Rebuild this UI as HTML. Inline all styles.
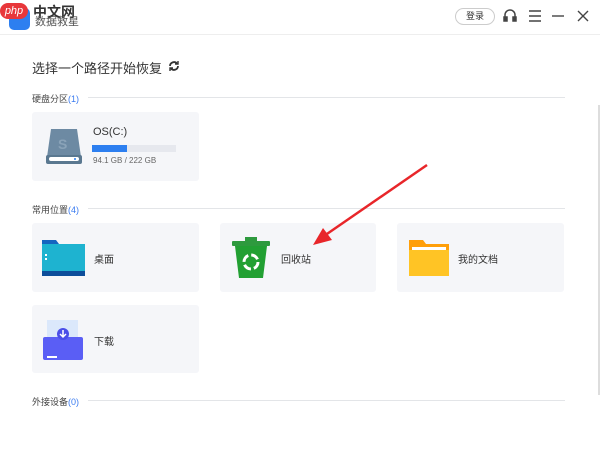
<!DOCTYPE html>
<html><head><meta charset="utf-8"><style>
*{margin:0;padding:0;box-sizing:border-box}
body{width:600px;height:459px;background:#fff;font-family:"Liberation Sans","Noto Sans CJK SC",sans-serif;position:relative;overflow:hidden;color:#333}
.a{position:absolute}
.card{position:absolute;background:#f5f6f9;border-radius:3px}
.sec{position:absolute;left:32px;font-size:9px;color:#444}
.sec b{font-weight:normal;color:#3a7bf0}
.line{position:absolute;left:88px;width:477px;height:1px;background:#e3e5e8}
.lbl{position:absolute;font-size:10px;color:#333}
</style></head><body>
<div class="a" style="left:0;top:34px;width:600px;height:1px;background:#eee"></div>
<div class="a" style="left:9px;top:8px;width:21px;height:22px;background:#2d7ff0;border-radius:5px"></div>
<div class="a" style="left:0;top:3px;width:28px;height:16px;background:#e8373b;border-radius:8px;color:#fff;font-size:11px;font-style:italic;text-align:center;line-height:16px">php</div>
<div class="a" style="left:33px;top:2px;font-size:14px;font-weight:bold;color:#333">中文网</div>
<div class="a" style="left:35px;top:13px;font-size:11px;color:#555">数据救星</div>
<div class="a" style="left:455px;top:8px;width:40px;height:17px;border:1px solid #ccc;border-radius:9px;font-size:9px;text-align:center;line-height:15px">登录</div>
<svg class="a" style="left:502px;top:8px" width="16" height="16" viewBox="0 0 16 16" fill="none" stroke="#444" stroke-width="1.5"><path d="M3 10V7a5 5 0 0 1 10 0v3"/><rect x="2" y="9" width="3" height="4" fill="#444"/><rect x="11" y="9" width="3" height="4" fill="#444"/></svg>
<svg class="a" style="left:528px;top:9px" width="14" height="14" stroke="#444" stroke-width="1.4"><path d="M1 2h12M1 7h12M1 12h12"/></svg>
<svg class="a" style="left:551px;top:9px" width="14" height="14" stroke="#444" stroke-width="1.4"><path d="M1 7h12"/></svg>
<svg class="a" style="left:576px;top:9px" width="14" height="14" stroke="#444" stroke-width="1.4"><path d="M2 2l10 10M12 2L2 12"/></svg>

<div class="a" style="left:32px;top:58px;font-size:13px;color:#333">选择一个路径开始恢复</div>
<svg class="a" style="left:168px;top:60px" width="12" height="12" viewBox="0 0 12 12" fill="none" stroke="#333" stroke-width="1.8"><path d="M2 6a4 4 0 0 1 7-2.5M10 6a4 4 0 0 1-7 2.5"/><path d="M10 1v3H7M2 11V8h3" stroke-width="1.4"/></svg>

<div class="sec" style="top:92px">硬盘分区<b>(1)</b></div><div class="line" style="top:97px"></div>
<div class="card" style="left:32px;top:112px;width:167px;height:69px"></div>
<svg class="a" style="left:45px;top:127px" width="38" height="38" viewBox="0 0 38 38"><path d="M6 2h26l4 28H2z" fill="#6d8aa3"/><rect x="1" y="28" width="36" height="9" rx="2" fill="#5a7890"/><rect x="4" y="30" width="30" height="4" rx="2" fill="#fff"/><circle cx="30" cy="32" r="1" fill="#2d7ff0"/><text x="13" y="22" font-size="14" font-weight="bold" fill="#8aa3b8" font-family="Liberation Sans">S</text></svg>
<div class="lbl" style="left:93px;top:126px;font-size:11px">OS(C:)</div>
<div class="a" style="left:92px;top:145px;width:84px;height:7px;background:#e6e8ee"></div>
<div class="a" style="left:92px;top:145px;width:35px;height:7px;background:#2d7ff0"></div>
<div class="a" style="left:93px;top:156px;font-size:8px;color:#666">94.1 GB / 222 GB</div>

<div class="sec" style="top:203px">常用位置<b>(4)</b></div><div class="line" style="top:208px"></div>
<div class="card" style="left:32px;top:223px;width:167px;height:69px"></div>
<div class="card" style="left:220px;top:223px;width:156px;height:69px"></div>
<div class="card" style="left:397px;top:223px;width:167px;height:69px"></div>
<div class="card" style="left:32px;top:305px;width:167px;height:68px"></div>

<svg class="a" style="left:42px;top:240px" width="43" height="36"><path d="M0 0h14l3 4H0z" fill="#1565c0"/><rect x="0" y="4" width="43" height="32" fill="#1eb3d0"/><rect x="0" y="31" width="43" height="5" fill="#0d4d9a"/><rect x="3" y="14" width="2" height="2" fill="#fff"/><rect x="3" y="18" width="2" height="2" fill="#fff"/></svg>
<div class="lbl" style="left:94px;top:251px">桌面</div>

<svg class="a" style="left:232px;top:237px" width="40" height="42"><rect x="0" y="4" width="38" height="5" rx="1" fill="#2e9a3e"/><rect x="13" y="0" width="12" height="5" fill="#2e9a3e"/><path d="M3 9h32l-4 32H7z" fill="#22a033"/><circle cx="19" cy="25" r="7" fill="none" stroke="#fff" stroke-width="3" stroke-dasharray="8 3"/></svg>
<div class="lbl" style="left:281px;top:251px">回收站</div>

<svg class="a" style="left:409px;top:240px" width="40" height="36"><path d="M0 0h14l3 4h23v32H0z" fill="#ff9f0a"/><rect x="3" y="7" width="34" height="3" fill="#fff"/><rect x="0" y="10" width="40" height="26" fill="#ffc425"/></svg>
<div class="lbl" style="left:458px;top:251px">我的文档</div>

<svg class="a" style="left:43px;top:320px" width="42" height="40"><rect x="4" y="0" width="31" height="22" fill="#dbe8fb"/><rect x="0" y="17" width="40" height="23" rx="2" fill="#5a5ef5"/><rect x="4" y="36" width="10" height="2" fill="#fff"/><circle cx="20" cy="14" r="6" fill="#4a4ee8"/><path d="M20 10v7M17 14l3 3 3-3" stroke="#fff" stroke-width="1.5" fill="none"/></svg>
<div class="lbl" style="left:94px;top:333px">下载</div>

<div class="sec" style="top:395px">外接设备<b>(0)</b></div><div class="line" style="top:400px"></div>
<div class="a" style="left:598px;top:105px;width:2px;height:290px;background:#ddd"></div>

<svg class="a" style="left:0;top:0" width="600" height="459"><line x1="427" y1="165" x2="324" y2="236" stroke="#e8262a" stroke-width="2.5"/><path d="M313 245l19-5-9-12z" fill="#e8262a"/></svg>
</body></html>
